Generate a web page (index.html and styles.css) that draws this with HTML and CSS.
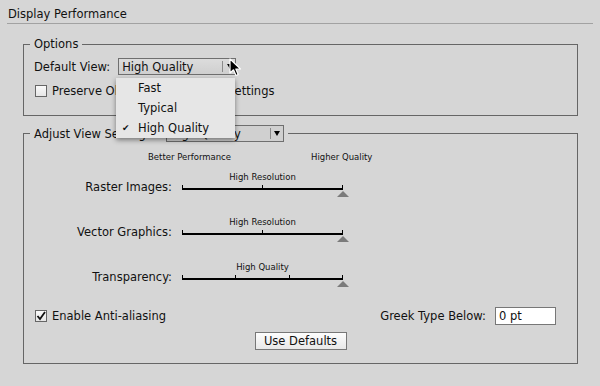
FILE: index.html
```html
<!DOCTYPE html>
<html lang="en">
<head>
  <meta charset="UTF-8">
  <title>Display Performance</title>
  <link rel="stylesheet" href="styles.css">
</head>
<body>
  <div class="title">Display Performance</div>

  <fieldset class="options">
    <legend>Options</legend>
    <div class="row">
      <span>Default View:</span>
      <div class="select view-select">
        <span class="select-text">High Quality</span>
        <span class="select-btn"><span class="caret"></span></span>
      </div>
    </div>
    <div class="row check-row">
      <span class="checkbox"></span>
      <span>Preserve Object-Level Display Settings</span>
    </div>

    <!-- open popup menu -->
    <div class="menu">
      <div class="menu-item">Fast</div>
      <div class="menu-item">Typical</div>
      <div class="menu-item checked">High Quality</div>
    </div>
    <svg class="cursor" width="14" height="20" viewBox="0 0 14 20">
      <path d="M1 1 L1 15 L4.5 11.8 L7 17.5 L9.2 16.5 L6.8 11 L11.5 11 Z" fill="#000" stroke="#fff" stroke-width="1.2" stroke-linejoin="round"/>
    </svg>
  </fieldset>

  <fieldset class="adjust">
    <legend>
      <span>Adjust View Settings:</span>
      <div class="select adjust-select">
        <span class="select-text">High Quality</span>
        <span class="select-btn"><span class="caret"></span></span>
      </div>
    </legend>

    <div class="scale">
      <span class="scale-low">Better Performance</span>
      <span class="scale-high">Higher Quality</span>
    </div>

    <div class="slider-row">
      <span class="slider-label">Raster Images:</span>
      <div class="slider">
        <div class="slider-caption">High Resolution</div>
        <div class="track"><span class="seg"></span><span class="seg"></span></div>
        <div class="thumb-lane"><span class="thumb"></span></div>
      </div>
    </div>

    <div class="slider-row">
      <span class="slider-label">Vector Graphics:</span>
      <div class="slider">
        <div class="slider-caption">High Resolution</div>
        <div class="track"><span class="seg"></span><span class="seg"></span></div>
        <div class="thumb-lane"><span class="thumb"></span></div>
      </div>
    </div>

    <div class="slider-row">
      <span class="slider-label">Transparency:</span>
      <div class="slider">
        <div class="slider-caption">High Quality</div>
        <div class="track"><span class="seg"></span><span class="seg"></span><span class="seg"></span></div>
        <div class="thumb-lane"><span class="thumb"></span></div>
      </div>
    </div>

    <div class="bottom-row">
      <span class="checkbox on">
        <svg width="10" height="10" viewBox="0 0 10 10"><path d="M1.5 5 L4 8 L9 1" fill="none" stroke="#111" stroke-width="1.8"/></svg>
      </span>
      <span>Enable Anti-aliasing</span>
      <span class="greek">Greek Type Below:</span>
      <span class="field">0 pt</span>
    </div>

    <div class="buttons">
      <button class="btn">Use Defaults</button>
    </div>
  </fieldset>
</body>
</html>
```

FILE: styles.css
```css
html, body {
  margin: 0;
  height: 386px;
  overflow: hidden;
}
body {
  background-color: #d6d6d6;
  font-family: "DejaVu Sans", sans-serif;
  font-size: 11.5px;
  line-height: 16px;
  color: #111;
}
.title {
  margin: 0 7px;
  padding: 6px 0 1px 1px;
  border-bottom: 1px solid #a2a2a2;
}
fieldset {
  margin: 0 22px 0 23px;
  border: 1px solid #666;
  min-width: 0;
}
legend {
  padding: 0 4px;
  margin-left: -4px;
}
.options {
  position: relative;
  margin-top: 12px;
  padding: 6px 10px 16px;
}
.adjust {
  margin-top: 9px;
  padding: 9px 10px 13px;
}
.adjust legend {
  display: flex;
  align-items: center;
}
.row {
  display: flex;
  align-items: center;
  height: 17px;
}
.check-row {
  margin-top: 8px;
  height: 16px;
}

/* popup buttons */
.select {
  display: flex;
  align-items: center;
  height: 15px;
  border: 1px solid #6f6f6f;
  background: linear-gradient(#dcdcdc, #cfcfcf);
  box-sizing: content-box;
}
.view-select {
  width: 116px;
  margin-left: 8px;
}
.adjust-select {
  width: 116px;
  margin-left: 10px;
  background: #d0d0d0;
}
.select-text {
  flex: 1;
  padding-left: 3px;
}
.select-btn {
  display: flex;
  align-items: center;
  justify-content: center;
  width: 12px;
  height: 11px;
  border-left: 1px solid #8a8a8a;
}
.caret {
  width: 0;
  height: 0;
  border-left: 3px solid transparent;
  border-right: 3px solid transparent;
  border-top: 5px solid #000;
  margin-left: 1px;
}

.checkbox {
  display: inline-flex;
  align-items: center;
  justify-content: center;
  width: 10px;
  height: 10px;
  border: 1px solid #666;
  background: linear-gradient(#fafafa, #e6e6e6);
  margin: 0 5px 0 1px;
  flex: none;
}

/* popup menu */
.menu {
  position: absolute;
  left: 92px;
  top: 26px;
  width: 119px;
  background-color: #e6e6e6;
  box-shadow: 0 2px 5px rgba(0, 0, 0, 0.45);
  z-index: 5;
}
.menu-item {
  position: relative;
  height: 20px;
  line-height: 20px;
  padding-left: 22px;
}
.menu-item.checked::before {
  content: "\2714";
  position: absolute;
  left: 6px;
  font-size: 9px;
}
.cursor {
  position: absolute;
  left: 205px;
  top: 6px;
  z-index: 6;
}

/* sliders */
.scale {
  display: flex;
  font-size: 8.5px;
  line-height: 12px;
}
.scale-low {
  margin-left: 114px;
}
.scale-high {
  margin-left: 80px;
}
.slider-row {
  display: flex;
  align-items: flex-end;
  margin-top: 8px;
}
.slider-row + .slider-row {
  margin-top: 19px;
}
.slider-label {
  width: 138px;
  text-align: right;
  margin-bottom: 2px;
}
.slider {
  width: 161px;
  margin-left: 10px;
}
.slider-caption {
  font-size: 8.5px;
  line-height: 12px;
  text-align: center;
  margin-bottom: 2px;
}
.track {
  display: flex;
  height: 5px;
  border-right: 1px solid #000;
}
.seg {
  flex: 1;
  border-left: 1px solid #000;
  border-bottom: 2px solid #000;
}
.thumb-lane {
  display: flex;
  justify-content: flex-end;
  margin: 1px -6px 0 0;
}
.thumb {
  width: 0;
  height: 0;
  border-left: 6px solid transparent;
  border-right: 6px solid transparent;
  border-bottom: 6px solid #7b7b7b;
}

.bottom-row {
  display: flex;
  align-items: center;
  margin-top: 20px;
  height: 18px;
}
.greek {
  margin-left: auto;
  margin-right: 9px;
}
.field {
  width: 56px;
  height: 16px;
  border: 1px solid #777;
  background-color: #fff;
  padding-left: 3px;
  margin-right: 11px;
}
.buttons {
  display: flex;
  justify-content: center;
  margin-top: 7px;
}
.btn {
  font: inherit;
  color: #111;
  width: 92px;
  height: 18px;
  padding: 0;
  border: 1px solid #777;
  background: linear-gradient(#fdfdfd, #e8e8e8);
}
```
